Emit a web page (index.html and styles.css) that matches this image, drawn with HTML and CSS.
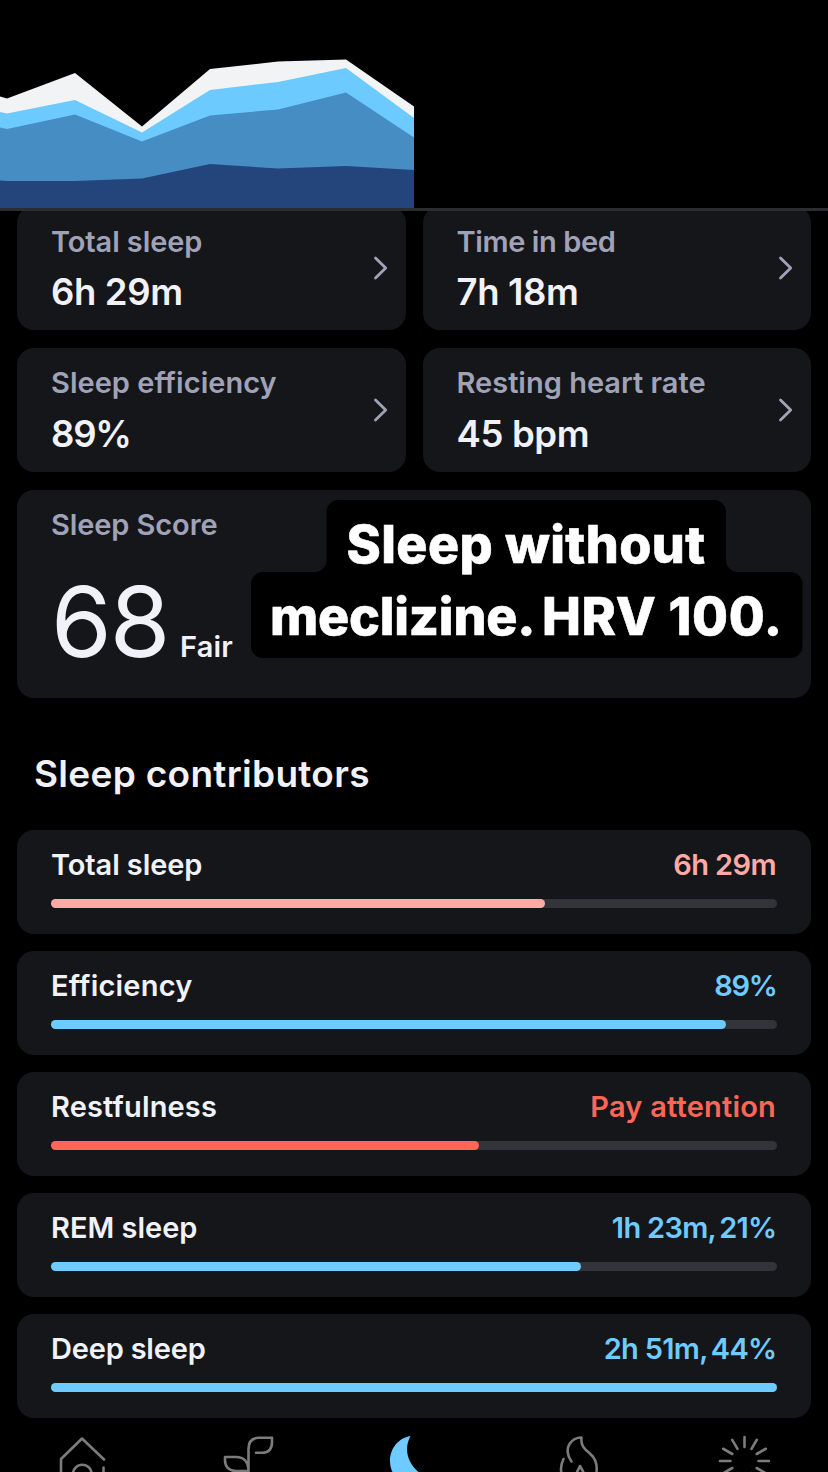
FILE: index.html
```html
<!DOCTYPE html>
<html lang="en">
<head>
<meta charset="utf-8">
<title>Sleep</title>
<link rel="stylesheet" href="styles.css">
</head>
<body>
<div class="screen">
  <header class="chart">
    <svg width="828" height="208" viewBox="0 0 828 208">
      <path fill="#f2f3f5" d="M0 96.5L7 98.5L75 73L142 126.5L210 69L278 61.5L346 59.5L414 106.5V208H0Z"/>
      <path fill="#6ccaff" d="M0 112L7 113.5L75 100L142 132.5L210 90L278 82L346 68L414 118V208H0Z"/>
      <path fill="#458dc3" d="M0 127.5L7 129L75 114.5L142 141.5L210 115.5L278 109.5L346 92.5L414 137.5V208H0Z"/>
      <path fill="#24457b" d="M0 180.5L7 181H75L142 178.5L210 164L278 168.5L346 166L414 170V208H0Z"/>
    </svg>
  </header>

  <main class="content">
    <section class="stats">
      <article class="card stat">
        <div><p class="label t-total">Total sleep</p><p class="value v-total">6h 29m</p></div>
        <svg class="chevron" width="16" height="26" viewBox="0 0 16 26"><path d="M2.500 3L12.700 13L2.500 23"/></svg>
      </article>
      <article class="card stat">
        <div><p class="label t-bed">Time in bed</p><p class="value v-bed">7h 18m</p></div>
        <svg class="chevron" width="16" height="26" viewBox="0 0 16 26"><path d="M2.500 3L12.700 13L2.500 23"/></svg>
      </article>
      <article class="card stat">
        <div><p class="label t-eff">Sleep efficiency</p><p class="value v-eff">89%</p></div>
        <svg class="chevron" width="16" height="26" viewBox="0 0 16 26"><path d="M2.500 3L12.700 13L2.500 23"/></svg>
      </article>
      <article class="card stat">
        <div><p class="label t-rate">Resting heart rate</p><p class="value v-rate">45 bpm</p></div>
        <svg class="chevron" width="16" height="26" viewBox="0 0 16 26"><path d="M2.500 3L12.700 13L2.500 23"/></svg>
      </article>
    </section>

    <section class="card score">
      <p class="label t-score">Sleep Score</p>
      <p class="score-line"><span class="score-num">68</span><span class="score-word">Fair</span></p>
      <div class="caption">
        <svg class="caption-bg" width="552" height="158" viewBox="0 0 552 158">
          <path d="M88 0H463a12 12 0 0 1 12 12V60a12 12 0 0 0 12 12H539.500a12 12 0 0 1 12 12V146a12 12 0 0 1-12 12H12a12 12 0 0 1-12-12V84a12 12 0 0 1 12-12H63.500a12 12 0 0 0 12-12V12a12 12 0 0 1 12-12Z"/>
        </svg>
        <p class="caption-line c-one">Sleep without</p>
        <p class="caption-line c-two"><span class="c-word">meclizine.</span> HRV 100.</p>
      </div>
    </section>

    <h2 class="heading">Sleep contributors</h2>

    <section class="contributors">
      <article class="card item pink">
        <div class="row"><span class="name t-total">Total sleep</span><span class="amount a-total">6h 29m</span></div>
        <div class="track"><div class="fill" style="width:68.1%"></div></div>
      </article>
      <article class="card item blue">
        <div class="row"><span class="name n-eff">Efficiency</span><span class="amount a-eff">89%</span></div>
        <div class="track"><div class="fill" style="width:93%"></div></div>
      </article>
      <article class="card item red">
        <div class="row"><span class="name n-rest">Restfulness</span><span class="amount a-rest">Pay attention</span></div>
        <div class="track"><div class="fill" style="width:59%"></div></div>
      </article>
      <article class="card item blue">
        <div class="row"><span class="name n-rem">REM sleep</span><span class="amount a-rem">1h 23m<span class="share">, 21%</span></span></div>
        <div class="track"><div class="fill" style="width:73%"></div></div>
      </article>
      <article class="card item blue">
        <div class="row"><span class="name n-deep">Deep sleep</span><span class="amount a-deep">2h 51m<span class="share">, 44%</span></span></div>
        <div class="track"><div class="fill" style="width:100%"></div></div>
      </article>
    </section>
  </main>

  <nav class="tabs">
    <svg class="tab" viewBox="53 1431 60 60"><path d="M104 1459.500L82 1438.500L61 1459V1486H103.500V1467.500M73 1486V1474a9.300 9.300 0 0 1 18.600 0V1486"/></svg>
    <svg class="tab" viewBox="218 1431 60 60"><path d="M248.500 1486V1449C248.500 1441.500 252 1437.800 259 1437.800H272V1442C272 1449 269 1452.800 262 1452.800H256M248.500 1471C248.500 1462 244 1457 236 1457H225V1460C225 1467 229 1471 236 1471H248.500"/></svg>
    <svg class="tab active" viewBox="384 1431 60 60"><path d="M410.500 1436C398 1438 390 1449 390 1461C390 1475 401 1486 415 1486C425 1486 433 1485 439.500 1482C420 1478 407 1464 407 1449C407 1444 408.500 1440 410.500 1436Z"/></svg>
    <svg class="tab" viewBox="550 1431 60 60"><path d="M571.500 1461.500C566.500 1455 567 1448 569.500 1444C572.500 1439.500 577 1437.500 581.500 1437.500C580.500 1445 584 1449 590 1453.500C595 1458 597.500 1464 596.500 1472C595 1480 588 1486 579 1486C568 1486 561 1478 561 1469C561 1465 562 1462 563.500 1459M573.500 1486C573 1478 577 1473 580 1466C584 1473 587 1478 586 1486"/></svg>
    <svg class="tab" viewBox="715 1431 60 60"><path d="M758.500 1461H769M756.700 1468L765.800 1473.250M751.500 1473.100L756.750 1482.200M744.500 1475V1485.500M737.500 1473.100L732.250 1482.200M732.300 1468L723.200 1473.250M730.500 1461H720M732.300 1454L723.200 1448.750M737.500 1448.900L732.250 1439.800M744.500 1447V1437M751.500 1448.900L756.750 1439.800M756.700 1454L765.800 1448.750"/></svg>
  </nav>
</div>
</body>
</html>
```
FILE: styles.css
```css
* { box-sizing: border-box; }
body { margin: 0; background: #000; font-family: Inter, "Liberation Sans", sans-serif; }
p, h2 { margin: 0; }
.screen { width: 828px; height: 1472px; overflow: hidden; background: #000; color: #f1f2f8; }

.chart { position: relative; z-index: 1; height: 211px; border-bottom: 3px solid #2b2d31; background: #000; }
.chart svg { display: block; }

.content { margin-top: -5px; padding: 0 17px; }
.card { background: #15161a; border-radius: 17px; }
.stats { display: grid; grid-template-columns: 388.5px 388.5px; column-gap: 17px; row-gap: 17.5px; }
.stat { height: 124.3px; padding: 17.5px 17px 0 34px; display: flex; justify-content: space-between; }
.label { font-size: 29px; line-height: 36px; font-weight: 600; color: #a0a3b8; white-space: nowrap; }
.value { margin-top: 9.5px; font-size: 36.5px; line-height: 46px; font-weight: 600; letter-spacing: -0.35px; white-space: nowrap; }
.chevron { margin-top: 31.5px; fill: none; stroke: #a0a3b8; stroke-width: 2.8; stroke-linecap: round; stroke-linejoin: round; }

.score { position: relative; height: 208.5px; margin-top: 17.5px; padding: 17px 34px 0; }
.score-line { display: flex; align-items: baseline; margin-top: 20px; line-height: 118px; white-space: nowrap; }
.score-num { width: 129px; font-size: 98px; font-weight: 400; letter-spacing: -2px; }
.score-word { font-size: 29px; font-weight: 600; letter-spacing: 0.2px; }

/* Caption sticker laid over the score card */
.caption { position: absolute; left: 234px; top: 10.5px; width: 552px; height: 158px; color: #fff; }
.caption-bg { position: absolute; inset: 0; fill: #000; }
.caption-line { position: relative; height: 71.5px; line-height: 71.5px; font-size: 52px; font-weight: 800; -webkit-text-stroke: 0.6px #fff; white-space: nowrap; }
.c-one { padding: 9px 0 0 95.5px; letter-spacing: 0.4px; }
.c-two { padding: 9px 0 0 19px; letter-spacing: 0.7px; }
.c-word { margin-right: -5.5px; letter-spacing: -0.2px; }

/* Tracking per string */
.t-total { letter-spacing: -0.1px; }
.t-bed { letter-spacing: -0.4px; }
.t-eff { letter-spacing: 0.03px; }
.t-rate { letter-spacing: 0; }
.t-score { letter-spacing: -0.1px; }
.v-eff { letter-spacing: -1.2px; }
.n-eff { letter-spacing: 0.2px; }
.n-rest { letter-spacing: 0.15px; }
.n-rem { letter-spacing: 0; }
.n-deep { letter-spacing: -0.2px; }

.heading { margin: 54px 0 34px; padding-left: 17px; font-size: 37px; line-height: 44px; font-weight: 600; letter-spacing: 0.3px; white-space: nowrap; }

.contributors { display: flex; flex-direction: column; gap: 17px; }
.item { height: 104px; padding: 17px 34px 0; }
.row { display: flex; justify-content: space-between; padding-right: 1px; font-size: 29px; line-height: 36px; white-space: nowrap; }
.name { font-weight: 600; }
.amount { font-weight: 600; color: var(--tone); }
.a-total { letter-spacing: -0.6px; }
.a-eff { letter-spacing: -1.3px; margin-right: -0.5px; }
.a-rest { letter-spacing: 0.2px; }
.a-rem, .a-deep { letter-spacing: -0.7px; margin-right: -0.5px; }
.share { word-spacing: -3px; }
.track { height: 9px; margin-top: 16px; border-radius: 5px; background: #33343a; }
.fill { height: 9px; border-radius: 5px; background: var(--tone); }
.pink { --tone: #ffaaa7; }
.blue { --tone: #6ecbff; }
.red { --tone: #ff6658; }

.tabs { display: grid; grid-template-columns: repeat(5, 1fr); justify-items: center; padding-top: 13px; }
.tab { width: 60px; height: 60px; fill: none; stroke: #7c7c7e; stroke-width: 2.6; stroke-linecap: round; stroke-linejoin: round; }
.active { fill: #6ecbff; stroke: none; }
```
